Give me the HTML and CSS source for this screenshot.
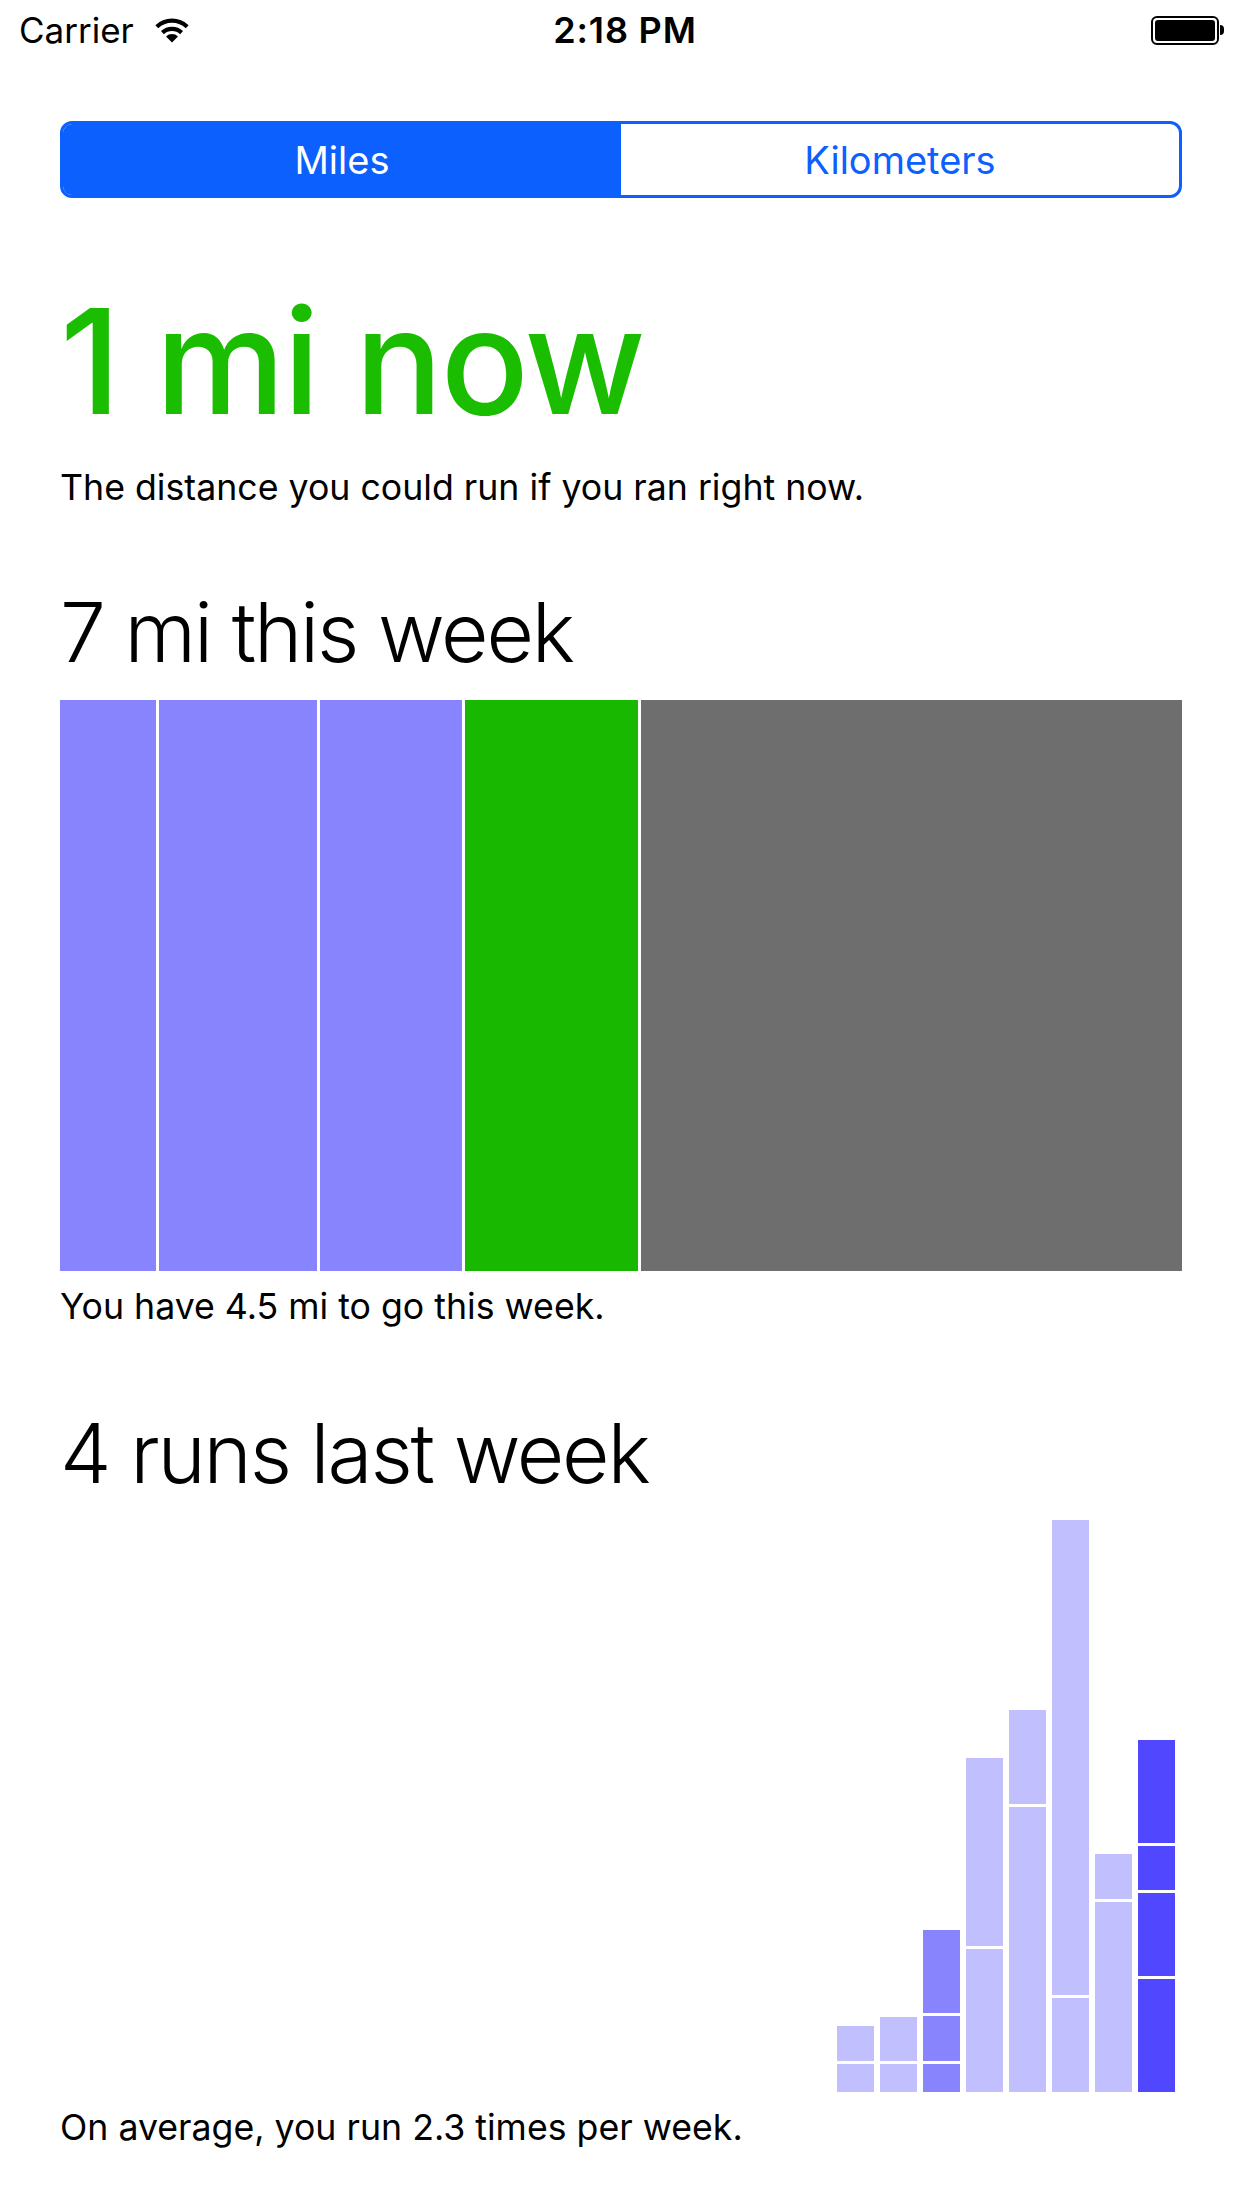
FILE: index.html
```html
<!DOCTYPE html>
<html>
<head>
  <meta charset="utf-8">
  <title>Run Distance</title>
  <link rel="stylesheet" href="styles.css">
</head>
<body>
  <div class="statusbar">
    <div class="carrier">
      <span>Carrier</span>
      <svg class="wifi" width="36" height="26" viewBox="0 0 36 26">
        <path d="M2.8 9.8 A22 22 0 0 1 33.2 9.8" fill="none" stroke="#000" stroke-width="4.2"/>
        <path d="M8.4 15.6 A14 14 0 0 1 27.6 15.6" fill="none" stroke="#000" stroke-width="4.2"/>
        <path d="M18 25.5 L12 19.5 A8.5 8.5 0 0 1 24 19.5 Z" fill="#000"/>
      </svg>
    </div>
    <div class="time">2:18 PM</div>
    <div class="battery">
      <span class="cell"><span class="level"></span></span>
      <span class="nub"></span>
    </div>
  </div>

  <main class="content">
    <div class="segmented">
      <div class="segment selected">Miles</div>
      <div class="segment">Kilometers</div>
    </div>

    <h1 class="now">1 mi now</h1>
    <p class="caption now-caption">The distance you could run if you ran right now.</p>

    <h2 class="heading">7 mi this week</h2>
    <div class="week-bar">
      <span class="run" style="width: 96px"></span>
      <span class="run" style="width: 158px"></span>
      <span class="run" style="width: 142px"></span>
      <span class="today" style="width: 173px"></span>
      <span class="left" style="flex: 1"></span>
    </div>
    <p class="caption week-caption">You have 4.5 mi to go this week.</p>

    <h2 class="heading runs-heading">4 runs last week</h2>
    <div class="history">
      <div class="col light">
        <span style="height: 28px"></span>
        <span style="height: 35px"></span>
      </div>
      <div class="col light">
        <span style="height: 28px"></span>
        <span style="height: 44px"></span>
      </div>
      <div class="col mid">
        <span style="height: 28px"></span>
        <span style="height: 45px"></span>
        <span style="height: 83px"></span>
      </div>
      <div class="col light">
        <span style="height: 143px"></span>
        <span style="height: 188px"></span>
      </div>
      <div class="col light">
        <span style="height: 285px"></span>
        <span style="height: 94px"></span>
      </div>
      <div class="col light">
        <span style="height: 94px"></span>
        <span style="height: 475px"></span>
      </div>
      <div class="col light">
        <span style="height: 190px"></span>
        <span style="height: 45px"></span>
      </div>
      <div class="col dark">
        <span style="height: 113px"></span>
        <span style="height: 83px"></span>
        <span style="height: 44px"></span>
        <span style="height: 103px"></span>
      </div>
    </div>
    <p class="caption avg-caption">On average, you run 2.3 times per week.</p>
  </main>
</body>
</html>
```

FILE: styles.css
```css
* {
  box-sizing: border-box;
}

body {
  margin: 0;
  width: 1242px;
  height: 2208px;
  background: #fff;
  color: #000;
  font-family: Inter, "Liberation Sans", sans-serif;
  overflow: hidden;
}

/* status bar */
.statusbar {
  height: 60px;
  display: flex;
  align-items: center;
  justify-content: space-between;
  padding: 0 18px 0 19px;
  position: relative;
}

.carrier {
  display: flex;
  align-items: center;
  gap: 20px;
  font-size: 35px;
  line-height: 1;
}

.wifi {
  display: block;
}

.time {
  position: absolute;
  left: 8px;
  right: 0;
  text-align: center;
  font-size: 36px;
  font-weight: 600;
  line-height: 1;
  letter-spacing: 0.8px;
}

.battery {
  display: flex;
  align-items: center;
}

.battery .cell {
  display: block;
  width: 68px;
  height: 29px;
  border: 2px solid #000;
  border-radius: 6px;
  padding: 2px;
}

.battery .level {
  display: block;
  height: 100%;
  background: #000;
  border-radius: 3px;
}

.battery .nub {
  display: block;
  width: 4px;
  height: 10px;
  background: #000;
  border-radius: 0 4px 4px 0;
  margin-left: 1px;
}

/* page */
.content {
  padding: 0 60px;
}

.segmented {
  margin-top: 61px;
  height: 77px;
  display: flex;
  border: 3px solid #0b60fe;
  border-radius: 12px;
  overflow: hidden;
}

.segment {
  flex: 1;
  display: flex;
  align-items: center;
  justify-content: center;
  font-size: 38px;
  color: #0b60fe;
  padding-top: 1px;
}

.segment.selected {
  background: #0b60fe;
  color: #fff;
}

.now {
  margin: 90px 0 0;
  font-size: 146px;
  line-height: 146px;
  font-weight: 500;
  color: #1abd00;
  letter-spacing: -2px;
}

.caption {
  margin: 0;
  font-size: 35.7px;
  line-height: 32px;
}

.now-caption {
  margin-top: 37px;
}

.heading {
  margin: 89px 0 0;
  font-size: 82px;
  line-height: 82px;
  font-weight: 300;
  letter-spacing: -2.2px;
}

.week-bar {
  margin-top: 26px;
  height: 571px;
  display: flex;
  gap: 3px;
}

.week-bar span {
  display: block;
}

.week-bar .run {
  background: #8884fe;
}

.week-bar .today {
  background: #18b800;
}

.week-bar .left {
  background: #6e6e6e;
}

.week-caption {
  margin-top: 19px;
}

.runs-heading {
  margin-top: 91px;
}

.history {
  margin-top: 24px;
  height: 573px;
  display: flex;
  justify-content: flex-end;
  align-items: flex-end;
  gap: 6px;
  padding-right: 7px;
}

.col {
  width: 37px;
  display: flex;
  flex-direction: column-reverse;
  gap: 3px;
}

.col span {
  display: block;
}

.col.light span {
  background: #c1bffd;
}

.col.mid span {
  background: #8884fe;
}

.col.dark span {
  background: #5147fe;
}

.avg-caption {
  margin-top: 19px;
}
```
